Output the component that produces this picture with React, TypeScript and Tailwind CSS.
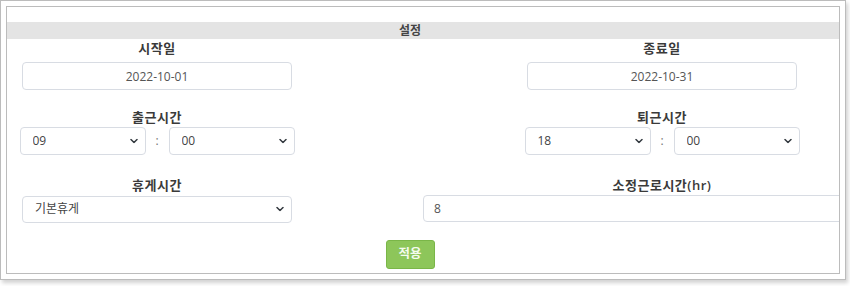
import { ReactNode } from 'react';

const font = { fontFamily: '"Open Sans", "Noto Sans CJK KR", sans-serif' };

function Label({ children }: { children: ReactNode }) {
  return (
    <div className="h-[18px] text-[13px] leading-[18px] font-semibold tracking-[0.5px] text-[#3a3a3a] text-center">
      {children}
    </div>
  );
}

function Chevron() {
  return (
    <svg
      className="absolute right-[8px] top-1/2 -translate-y-1/2 pointer-events-none"
      width="8"
      height="5"
      viewBox="0 0 8 5"
      fill="none"
    >
      <path d="M1 1 L4 4 L7 1" stroke="#343a40" strokeWidth="1.5" strokeLinecap="round" strokeLinejoin="round" />
    </svg>
  );
}

function Select({ value, options, className }: { value: string; options: string[]; className: string }) {
  return (
    <div className={`relative ${className}`}>
      <select
        defaultValue={value}
        className="w-full h-full appearance-none rounded-[4px] border border-[#d8dce3] bg-white pl-[12px] text-[12px] text-[#444] outline-none"
        style={font}
      >
        {options.map((o) => (
          <option key={o}>{o}</option>
        ))}
      </select>
      <Chevron />
    </div>
  );
}

function TimeRow({ hour, minute }: { hour: string; minute: string }) {
  const hours = Array.from({ length: 24 }, (_, i) => String(i).padStart(2, '0'));
  const minutes = ['00', '10', '20', '30', '40', '50'];
  return (
    <div className="mt-[1px] flex items-center justify-center">
      <Select value={hour} options={hours} className="w-[126px] h-[28px]" />
      <span className="w-[23px] text-center text-[12px] text-[#777]">:</span>
      <Select value={minute} options={minutes} className="w-[126px] h-[28px]" />
    </div>
  );
}

export default function App() {
  return (
    <div className="w-[850px] h-[286px] bg-white" style={font}>
      <div className="w-[846px] h-[280px] border border-[#bcbcbc] bg-white p-[5px] shadow-[2px_3px_4px_rgba(0,0,0,0.18)]">
        <div className="h-full border border-[#bcbcbc] overflow-hidden pt-[15px]">
          <div className="h-[17px] bg-[#e4e4e4]">
            <div className="w-[806px] text-center text-[12px] leading-[17px] font-semibold text-[#444]">설정</div>
          </div>

          <div className="grid grid-cols-[300px_500px] gap-x-[105px] w-[905px]">
            {/* 시작일 / 종료일 */}
            <div className="flex flex-col items-center">
              <Label>시작일</Label>
              <input
                defaultValue="2022-10-01"
                className="mt-[5px] w-[270px] h-[28px] rounded-[4px] border border-[#d8dce3] text-center text-[12px] text-[#555] outline-none"
                style={font}
              />
            </div>
            <div className="flex flex-col items-center">
              <Label>종료일</Label>
              <input
                defaultValue="2022-10-31"
                className="mt-[5px] w-[270px] h-[28px] rounded-[4px] border border-[#d8dce3] text-center text-[12px] text-[#555] outline-none"
                style={font}
              />
            </div>

            {/* 출근시간 / 퇴근시간 */}
            <div className="mt-[18px] flex flex-col items-center">
              <Label>출근시간</Label>
              <TimeRow hour="09" minute="00" />
            </div>
            <div className="mt-[18px] flex flex-col items-center">
              <Label>퇴근시간</Label>
              <TimeRow hour="18" minute="00" />
            </div>

            {/* 휴게시간 / 소정근로시간 */}
            <div className="mt-[21px] flex flex-col items-center">
              <Label>휴게시간</Label>
              <Select value="기본휴게" options={['기본휴게', '직접입력']} className="mt-[1px] w-[270px] h-[27px]" />
            </div>
            <div className="mt-[21px] flex flex-col items-center">
              <Label>소정근로시간(hr)</Label>
              <input
                defaultValue="8"
                className="mt-[1px] w-[478px] h-[27px] rounded-[4px] border border-[#d8dce3] pl-[10px] text-[12px] text-[#555] outline-none"
                style={font}
              />
            </div>
          </div>

          <div className="w-[806px] flex justify-center mt-[18px]">
            <button className="w-[49px] h-[29px] rounded-[3px] border border-[#7ab648] bg-[#8dc65a] text-[12.5px] font-bold text-[#f4fbee]">
              적용
            </button>
          </div>
        </div>
      </div>
    </div>
  );
}
